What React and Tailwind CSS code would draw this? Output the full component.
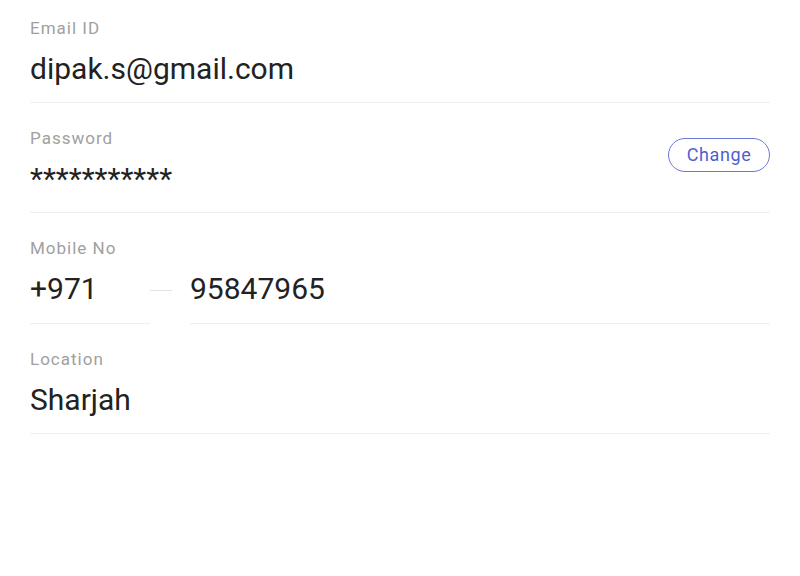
const Label = ({ children }) => (
  <div className="text-[17px] leading-[24px] tracking-[1px] text-[#a0a0a0]">{children}</div>
)

const Field = ({ label, children, right, first }) => (
  <div className={`flex items-center justify-between border-b border-[#eeeeee] pb-[15px] ${first ? "pt-[16px]" : "pt-[23px]"}`}>
    <div className="flex-1">
      <Label>{label}</Label>
      <div className="mt-[11px] text-[30px] leading-[36px] text-[#222]">{children}</div>
    </div>
    {right}
  </div>
)

export default function App() {
  return (
    <div className="min-h-[576px] bg-white px-[30px] font-['Roboto',sans-serif]">
      <Field first label="Email ID">dipak.s@gmail.com</Field>
      <Field
        label="Password"
        right={
          <button className="mb-[13px] h-[34px] w-[102px] rounded-full border border-[#6a78d8] text-[18px] leading-[32px] tracking-[0.6px] text-[#4f5fd1]">
            Change
          </button>
        }
      >
        ***********
      </Field>
      <div className="pt-[23px]">
        <Label>Mobile No</Label>
        <div className="mt-[11px] flex items-center">
          <div className="w-[120px] border-b border-[#eeeeee] pb-[16px] text-[30px] leading-[36px] text-[#222]">+971</div>
          <div className="mb-[14px] h-px w-[22px] bg-[#e3e3e3]" />
          <div className="ml-[18px] flex-1 border-b border-[#eeeeee] pb-[16px] text-[30px] leading-[36px] text-[#222]">95847965</div>
        </div>
      </div>
      <Field label="Location">Sharjah</Field>
    </div>
  )
}
